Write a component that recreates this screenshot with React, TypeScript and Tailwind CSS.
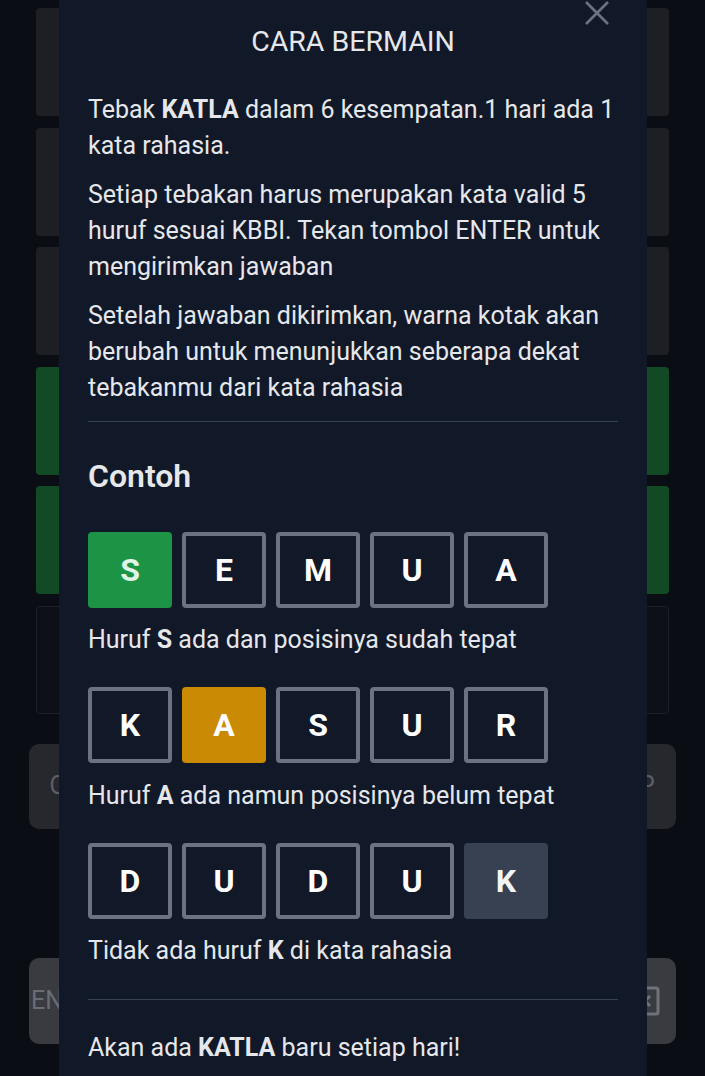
import React from 'react';

const font = { fontFamily: 'Roboto, "Noto Sans", sans-serif' };

type TileKind = 'correct' | 'present' | 'absent' | 'empty';

const boardRows: string[] = ['dim', 'dim', 'dim', 'green', 'green', 'empty'];

const Tile = ({ letter, kind }: { letter: string; kind: TileKind }) => {
  const base = 'w-[84px] h-[76px] rounded-[4px] flex items-center justify-center text-[32px] font-bold';
  if (kind === 'correct') return <div className={`${base} bg-[#1d9445] text-[#e0f5e5]`}>{letter}</div>;
  if (kind === 'present') return <div className={`${base} bg-[#ca8a04] text-white`}>{letter}</div>;
  if (kind === 'absent') return <div className={`${base} bg-[#374151] text-[#f3f4f6]`}>{letter}</div>;
  return <div className={`${base} border-4 border-[#6b7280] text-white`}>{letter}</div>;
};

const Example = ({ word, mark, kind }: { word: string; mark: number; kind: TileKind }) => (
  <div className="flex gap-[10px]">
    {word.split('').map((ch, i) => (
      <Tile key={i} letter={ch} kind={i === mark ? kind : 'empty'} />
    ))}
  </div>
);

export default function App() {
  return (
    <div className="relative w-[705px] h-[1076px] overflow-hidden bg-[#0a0d14]" style={font}>
      {/* game behind the dialog */}
      <div className="flex flex-col">
        <div className="flex flex-col gap-[11.5px] pt-[8px] px-[36px]">
          {boardRows.map((r, i) => (
            <div key={i} className="grid grid-cols-5 gap-[11px]">
              {[0, 1, 2, 3, 4].map((c) => (
                <div
                  key={c}
                  className={`h-[108px] rounded-[4px] ${
                    r === 'dim'
                      ? 'bg-[#1d1f25]'
                      : r === 'green'
                      ? 'bg-[#114a24]'
                      : 'bg-[#0c0f15] border border-[#1c1f25]'
                  }`}
                />
              ))}
            </div>
          ))}
        </div>

        <div className="flex flex-col gap-[22px] mt-[30px] px-[29px]">
          <div className="grid grid-cols-10 gap-[7px]">
            {'QWERTYUIOP'.split('').map((k) => (
              <div key={k} className="h-[85px] rounded-[10px] bg-[#26282d] flex items-center justify-center text-[25px] text-[#5c5f66]">
                {k}
              </div>
            ))}
          </div>
          <div className="grid grid-cols-9 gap-[7px] px-[40px]">
            {'ASDFGHJKL'.split('').map((k) => (
              <div key={k} className="h-[85px] rounded-[10px] bg-[#26282d] flex items-center justify-center text-[25px] text-[#5c5f66]">
                {k}
              </div>
            ))}
          </div>
          <div className="flex gap-[7px]">
            <div className="w-[95px] h-[86px] rounded-[10px] bg-[#393b40] flex items-center pl-[2px] text-[25px] text-[#6a6d73]">ENTER</div>
            <div className="flex-1 grid grid-cols-7 gap-[7px]">
              {'ZXCVBNM'.split('').map((k) => (
                <div key={k} className="h-[86px] rounded-[10px] bg-[#393b40] flex items-center justify-center text-[25px] text-[#6a6d73]">
                  {k}
                </div>
              ))}
            </div>
            <div className="w-[95px] h-[86px] rounded-[10px] bg-[#393b40] flex items-center justify-end pr-[16px]">
              <svg width="30" height="30" viewBox="0 0 30 30" fill="none" stroke="#6f7278" strokeWidth="3">
                <rect x="2" y="2" width="26" height="26" rx="2" />
                <path d="M10 10l10 10M20 10l-10 10" />
              </svg>
            </div>
          </div>
        </div>
      </div>

      {/* dialog */}
      <div className="absolute left-[59px] top-0 w-[588px] h-[1076px] bg-[#111827] px-[29px] text-[#e5e7eb]">
        <button className="absolute left-[526px] top-[1px] w-[24px] h-[24px]">
          <svg width="24" height="24" viewBox="0 0 24 24" fill="none" stroke="#6b7280" strokeWidth="2.6">
            <path d="M1 1l22 22M23 1L1 23" />
          </svg>
        </button>

        <h2 className="pt-[24px] text-center text-[28.5px] leading-[36px] font-normal">CARA BERMAIN</h2>

        <div className="mt-[32px] flex flex-col gap-[13px] text-[25px] leading-[36px]">
          <p>
            Tebak <b className="font-bold">KATLA</b> dalam 6 kesempatan.1 hari ada 1 kata rahasia.
          </p>
          <p>Setiap tebakan harus merupakan kata valid 5 huruf sesuai KBBI. Tekan tombol ENTER untuk mengirimkan jawaban</p>
          <p>Setelah jawaban dikirimkan, warna kotak akan berubah untuk menunjukkan seberapa dekat tebakanmu dari kata rahasia</p>
        </div>

        <div className="mt-[15px] h-px bg-[#374151]" />

        <h3 className="mt-[34px] text-[32px] leading-[40px] font-semibold">Contoh</h3>

        <div className="mt-[36px] flex flex-col text-[25px] leading-[36px]">
          <Example word="SEMUA" mark={0} kind="correct" />
          <p className="mt-[14px]">
            Huruf <b className="font-bold">S</b> ada dan posisinya sudah tepat
          </p>
          <div className="mt-[29px]">
            <Example word="KASUR" mark={1} kind="present" />
          </div>
          <p className="mt-[15px]">
            Huruf <b className="font-bold">A</b> ada namun posisinya belum tepat
          </p>
          <div className="mt-[29px]">
            <Example word="DUDUK" mark={4} kind="absent" />
          </div>
          <p className="mt-[14px]">
            Tidak ada huruf <b className="font-bold">K</b> di kata rahasia
          </p>
        </div>

        <div className="mt-[30px] h-px bg-[#374151]" />

        <p className="mt-[30px] text-[25px] leading-[36px]">
          Akan ada <b className="font-bold">KATLA</b> baru setiap hari!
        </p>
      </div>
    </div>
  );
}
